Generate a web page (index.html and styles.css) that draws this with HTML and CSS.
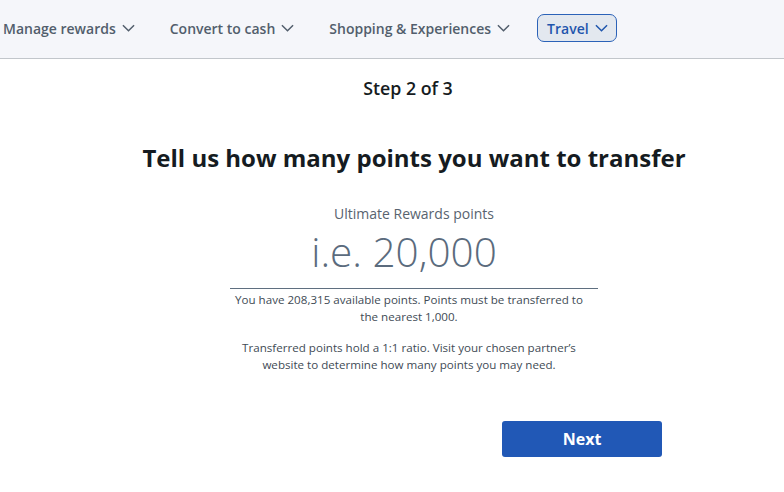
FILE: index.html
```html
<!DOCTYPE html>
<html>
<head>
<meta charset="utf-8">
<link rel="stylesheet" href="styles.css">
</head>
<body>
<nav class="nav">
  <div class="nav-item">Manage rewards <svg class="chev" viewBox="0 0 14 8"><path d="M1 1l6 6 6-6"/></svg></div>
  <div class="nav-item">Convert to cash <svg class="chev" viewBox="0 0 14 8"><path d="M1 1l6 6 6-6"/></svg></div>
  <div class="nav-item">Shopping &amp; Experiences <svg class="chev" viewBox="0 0 14 8"><path d="M1 1l6 6 6-6"/></svg></div>
  <div class="nav-item active">Travel <svg class="chev" viewBox="0 0 14 8"><path d="M1 1l6 6 6-6"/></svg></div>
</nav>
<main class="main">
  <div class="step">Step 2 of 3</div>
  <h1 class="title">Tell us how many points you want to transfer</h1>
  <div class="field">
    <div class="label">Ultimate Rewards points</div>
    <div class="input">i.e. 20,000</div>
    <p class="note">You have 208,315 available points. Points must be transferred to the nearest 1,000.</p>
    <p class="note">Transferred points hold a 1:1 ratio. Visit your chosen partner’s website to determine how many points you may need.</p>
  </div>
  <div class="actions">
    <button class="btn">Next</button>
  </div>
</main>
</body>
</html>
```
FILE: styles.css
```css
* { box-sizing: border-box; }
body {
  margin: 0;
  font-family: "Open Sans", "Noto Sans", sans-serif;
  background: #fff;
  color: #1b2229;
}
.nav {
  height: 59px;
  background: #f5f6fa;
  border-bottom: 1px solid #c2c6cb;
  display: flex;
  align-items: center;
  padding-left: 3px;
  padding-bottom: 2px;
  gap: 35px;
}
.nav-item {
  display: flex;
  align-items: center;
  gap: 6px;
  font-size: 14px;
  font-weight: 600;
  color: #525e6c;
  white-space: nowrap;
}
.chev {
  width: 13px;
  height: 8px;
  fill: none;
  stroke: currentColor;
  stroke-width: 1.6;
}
.nav-item.active {
  margin-left: -8px;
  height: 28px;
  padding: 0 8px 0 9px;
  border: 1px solid #2b62b8;
  border-radius: 7px;
  background: #e3e8ef;
  color: #1f56ad;
}
.main {
  display: flex;
  flex-direction: column;
  align-items: center;
}
.step {
  margin-top: 17px;
  margin-left: 32px;
  font-size: 17.8px;
  font-weight: 600;
  line-height: 24px;
  color: #151b21;
}
.title {
  margin: 42px 0 0 44px;
  font-size: 24px;
  font-weight: 700;
  line-height: 32px;
  color: #151b21;
}
.field {
  width: 368px;
  margin-left: 44px;
  margin-top: 31px;
  display: flex;
  flex-direction: column;
  align-items: center;
}
.label {
  font-size: 14px;
  color: #58636f;
  line-height: 18px;
}
.input {
  width: 100%;
  text-align: center;
  font-size: 40.5px;
  font-weight: 300;
  color: #5b6b7d;
  line-height: 58px;
  padding: 0 20px 7px 0;
  border-bottom: 1px solid #5f6f80;
}
.note {
  max-width: 360px;
  margin: 2px 10px 0 0;
  font-size: 11.6px;
  line-height: 17px;
  color: #414b55;
  text-align: center;
}
.note + .note { margin-top: 14px; }
.actions {
  width: 100%;
  display: flex;
  justify-content: flex-start;
  padding-left: 502px;
  margin-top: 48px;
}
.btn {
  width: 160px;
  height: 36px;
  border: none;
  border-radius: 3px;
  background: #2158b6;
  color: #fff;
  font-family: inherit;
  font-size: 16px;
  font-weight: 700;
}
```
